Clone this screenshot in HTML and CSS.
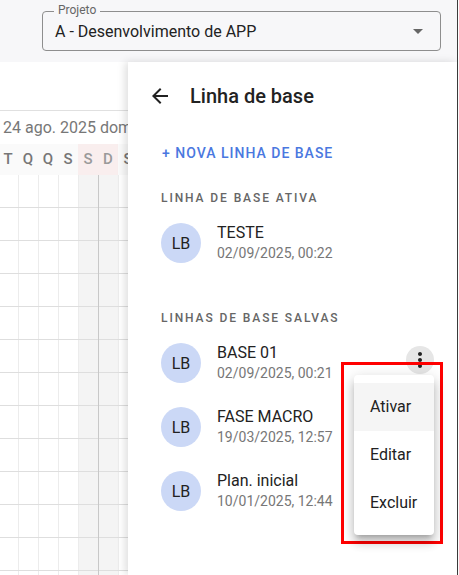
FILE: index.html
```html
<!DOCTYPE html>
<html lang="pt-BR">
<head>
<meta charset="utf-8">
<title>Linha de base</title>
<link rel="stylesheet" href="styles.css">
</head>
<body>
<div class="app">
  <header class="topbar">
    <div class="select">
      <span class="select-label">Projeto</span>
      <span class="select-value">A - Desenvolvimento de APP</span>
      <svg class="select-arrow" viewBox="0 0 24 24" aria-hidden="true"><path d="M7 10l5 5 5-5z"/></svg>
    </div>
  </header>
  <div class="main">
    <div class="gantt">
      <div class="gantt-top"></div>
      <div class="gantt-date">24 ago. 2025 dom</div>
      <div class="gantt-days">
        <span class="day">T</span><span class="day">Q</span><span class="day">Q</span><span class="day">S</span><span class="day wk">S</span><span class="day wk">D</span><span class="day">S</span>
      </div>
      <div class="gantt-grid"></div>
    </div>
    <aside class="panel">
      <div class="panel-head">
        <svg class="back" viewBox="0 0 24 24" aria-hidden="true"><path d="M20 11H7.83l5.59-5.59L12 4l-8 8 8 8 1.41-1.41L7.83 13H20v-2z"/></svg>
        <h2 class="panel-title">Linha de base</h2>
      </div>
      <button class="new-btn">+ Nova linha de base</button>
      <div class="section-label">Linha de base ativa</div>
      <ul class="list">
        <li class="item">
          <span class="avatar">LB</span>
          <span class="item-text"><span class="primary">TESTE</span><span class="secondary">02/09/2025, 00:22</span></span>
        </li>
      </ul>
      <div class="section-label saved-label">Linhas de base salvas</div>
      <ul class="list saved-list">
        <li class="item">
          <span class="avatar">LB</span>
          <span class="item-text"><span class="primary">BASE 01</span><span class="secondary">02/09/2025, 00:21</span></span>
          <span class="kebab"><svg viewBox="0 0 24 24" aria-hidden="true"><path d="M12 8c1.1 0 2-.9 2-2s-.9-2-2-2-2 .9-2 2 .9 2 2 2zm0 2c-1.1 0-2 .9-2 2s.9 2 2 2 2-.9 2-2-.9-2-2-2zm0 6c-1.1 0-2 .9-2 2s.9 2 2 2 2-.9 2-2-.9-2-2-2z"/></svg></span>
        </li>
        <li class="item">
          <span class="avatar">LB</span>
          <span class="item-text"><span class="primary">FASE MACRO</span><span class="secondary">19/03/2025, 12:57</span></span>
        </li>
        <li class="item">
          <span class="avatar">LB</span>
          <span class="item-text"><span class="primary">Plan. inicial</span><span class="secondary">10/01/2025, 12:44</span></span>
        </li>
      </ul>
      <div class="highlight"></div>
      <ul class="menu">
        <li class="menu-item active">Ativar</li>
        <li class="menu-item">Editar</li>
        <li class="menu-item">Excluir</li>
      </ul>
    </aside>
  </div>
</div>
</body>
</html>
```
FILE: styles.css
```css
* { box-sizing: border-box; margin: 0; padding: 0; }
html, body { width: 459px; height: 575px; overflow: hidden; background: #fff; }
body { font-family: Roboto, "Noto Sans", Arial, sans-serif; color: #222; }

.app {
  width: 458px;
  height: 575px;
  border-right: 1px solid #3c3c3c;
  display: flex;
  flex-direction: column;
}

/* top bar */
.topbar {
  flex: none;
  height: 62px;
  background: #f7f7f9;
  padding: 11px 0 0 42px;
}
.select {
  position: relative;
  width: 399px;
  height: 40px;
  border: 1px solid #8e8e8e;
  border-radius: 4px;
  display: flex;
  align-items: center;
  padding-left: 12px;
}
.select-label {
  position: absolute;
  left: 11px;
  top: -9px;
  padding: 0 4px;
  background: #f7f7f9;
  font-size: 12px;
  line-height: 14px;
  color: #666;
}
.select-value { font-size: 16px; color: #222; }
.select-arrow {
  width: 24px;
  height: 24px;
  margin-left: auto;
  margin-right: 10px;
  fill: #666;
}

/* main area */
.main { flex: 1; display: flex; min-height: 0; }

.gantt {
  flex: none;
  width: 128px;
  overflow: hidden;
  display: flex;
  flex-direction: column;
}
.gantt-top { flex: none; height: 49px; border-bottom: 1px solid #e0e0e0; }
.gantt-date {
  flex: none;
  height: 33px;
  line-height: 33px;
  padding-left: 3px;
  font-size: 16px;
  color: #777;
  white-space: nowrap;
}
.gantt-days {
  flex: none;
  height: 31px;
  display: flex;
  margin-left: -2px;
  background: #fafafa;
}
.day {
  flex: none;
  width: 20px;
  text-align: center;
  line-height: 31px;
  font-size: 15px;
  font-weight: 500;
  color: #777;
}
.day.wk { background: #f9eeee; color: #9a9a9a; }
.gantt-grid {
  flex: 1;
  background:
    linear-gradient(to right, transparent 98px, #c8c8c8 98px, #c8c8c8 99px, transparent 99px),
    repeating-linear-gradient(to bottom, transparent 0, transparent 32px, #dedede 32px, #dedede 33px),
    repeating-linear-gradient(to right, transparent 0, transparent 18px, #ececec 18px, #ececec 19px, transparent 19px, transparent 20px),
    linear-gradient(to right, transparent 78px, #f4f4f4 78px, #f4f4f4 118px, transparent 118px);
}

/* side panel */
.panel {
  position: relative;
  z-index: 1;
  flex: 1;
  background: #fff;
  box-shadow: -3px 0 8px rgba(0, 0, 0, 0.13);
  padding: 22px 23px 0 33px;
  display: flex;
  flex-direction: column;
}
.panel-head { display: flex; align-items: center; height: 24px; }
.back { width: 24px; height: 24px; margin-left: -13px; margin-right: 18px; fill: #222; }
.panel-title { font-size: 20px; font-weight: 500; line-height: 24px; color: #222; }

.new-btn {
  align-self: flex-start;
  margin-top: 27px;
  height: 36px;
  padding: 0 1px;
  border: 0;
  background: none;
  font-family: inherit;
  font-size: 14px;
  font-weight: 500;
  letter-spacing: 1px;
  text-transform: uppercase;
  color: #4a78e0;
}

.section-label {
  margin-top: 19px;
  font-size: 12px;
  font-weight: 500;
  line-height: 16px;
  letter-spacing: 1.9px;
  text-transform: uppercase;
  color: #666;
}
.saved-label { margin-top: 47px; }

.list { list-style: none; margin-top: 17px; display: flex; flex-direction: column; gap: 24px; }
.item { display: flex; align-items: center; gap: 16px; height: 40px; }
.avatar {
  flex: none;
  width: 40px;
  height: 40px;
  border-radius: 50%;
  background: #cbd8f6;
  display: flex;
  align-items: center;
  justify-content: center;
  font-size: 16px;
  color: #222;
}
.item-text { display: flex; flex-direction: column; }
.primary { font-size: 16px; line-height: 20px; color: #222; }
.secondary { font-size: 14px; line-height: 20px; color: #777; }

.kebab {
  margin-left: auto;
  align-self: flex-start;
  margin-top: 3px;
  width: 28px;
  height: 28px;
  border-radius: 50%;
  background: #e6e6e6;
  display: flex;
  align-items: center;
  justify-content: center;
}
.kebab svg { width: 24px; height: 24px; fill: #222; }

/* overlay: highlight + menu */
.highlight {
  position: absolute;
  left: 213px;
  top: 300px;
  width: 102px;
  height: 182px;
  border: 3px solid #ff0000;
}
.menu {
  position: absolute;
  left: 226px;
  top: 313px;
  width: 80px;
  list-style: none;
  padding: 8px 0;
  background: #fff;
  border-radius: 4px;
  box-shadow: 0 5px 5px -3px rgba(0,0,0,0.2), 0 8px 10px 1px rgba(0,0,0,0.14), 0 3px 14px 2px rgba(0,0,0,0.12);
}
.menu-item {
  height: 48px;
  line-height: 48px;
  padding-left: 16px;
  font-size: 16px;
  color: #222;
}
.menu-item.active { background: #f5f5f5; }
```
